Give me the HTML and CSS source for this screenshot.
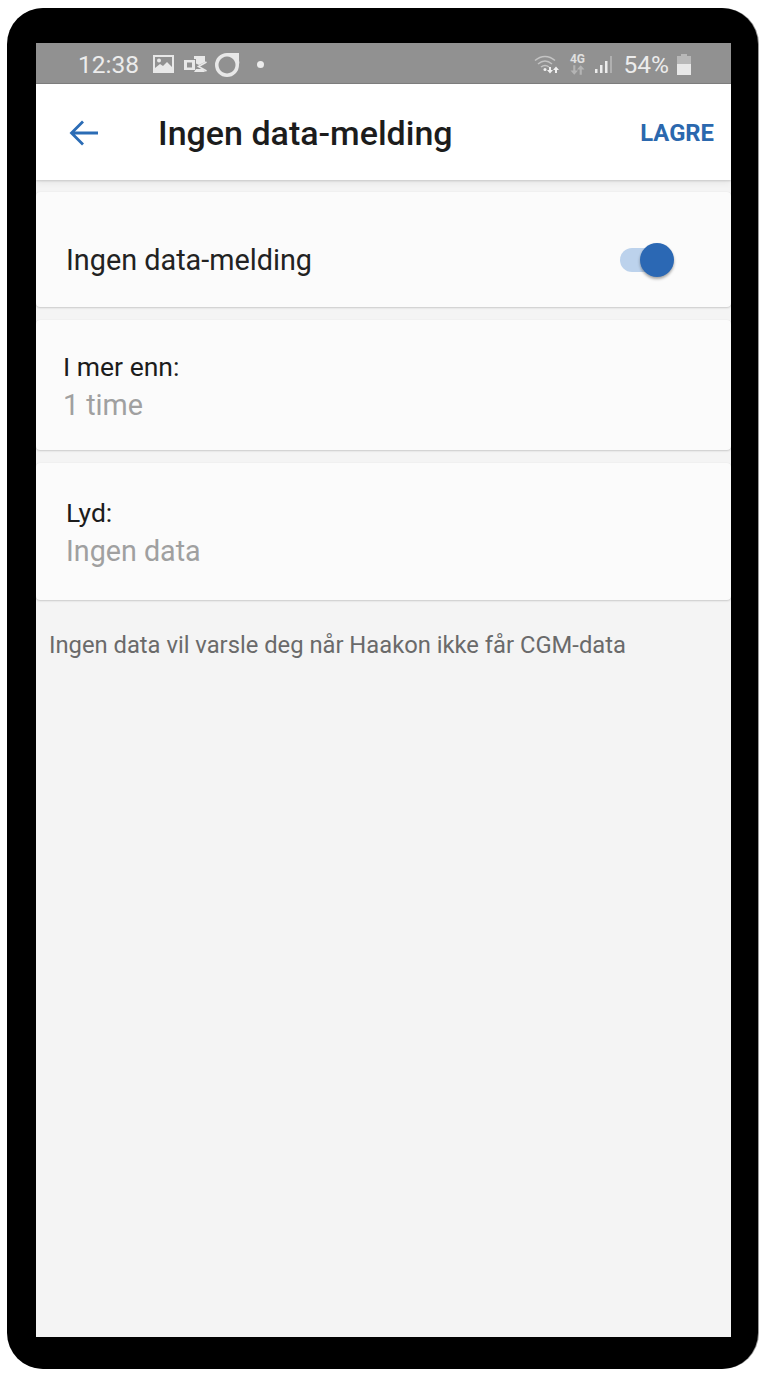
FILE: index.html
```html
<!DOCTYPE html>
<html lang="en">
<head>
  <meta charset="UTF-8" />
  <meta name="viewport" content="width=device-width, initial-scale=1.0" />
  <title>Ingen data-melding</title>
  <link rel="stylesheet" href="styles.css">
</head>
<body>
  <div class="phone">
    <div class="screen">
      <div class="status-bar">
        <div class="status-left">
          <span class="clock">12:38</span>
          <svg class="icon-image" width="21" height="18" viewBox="0 0 21 18">
            <path fill="#e8e8e8" fill-rule="evenodd" d="M0 0h21v18H0z M2 2v11l5-4 3 2 4-4 5 5V2z"/>
            <circle cx="6" cy="5.5" r="2" fill="#e8e8e8"/>
          </svg>
          <svg class="icon-mail" width="23" height="17" viewBox="0 0 23 17">
            <path fill="#e8e8e8" fill-rule="evenodd" d="M0 4h11v10H0z M3 6.5v5h5v-5z"/>
            <path fill="#e8e8e8" d="M10 0h11v6l-6 3-3-1.500V3h-2z"/>
            <path fill="none" stroke="#e8e8e8" stroke-width="1.600" d="M22.500 6l-8 4.500 8 4.500"/>
            <path fill="#e8e8e8" d="M12 13h7l2 3H10z"/>
          </svg>
          <svg class="icon-ring" width="25" height="25" viewBox="0 0 25 25">
            <path fill="#e8e8e8" fill-rule="evenodd" d="M12 1H24V9C24.800 10.500 24 11 24 13A12 12 0 1 1 12 1z M12 4.500a8.500 8.500 0 1 0 .01 0z"/>
          </svg>
          <span class="dot"></span>
        </div>
        <div class="status-right">
          <svg class="icon-wifi" width="27" height="20" viewBox="0 0 27 20">
            <g fill="none" stroke="#c4c4c4" stroke-width="1.500">
              <path d="M1 6.500C7 1 15 1 21 6.500"/>
              <path d="M4 10c4.500-3.800 9.500-3.800 14 0"/>
              <path d="M7 13c2.500-2 5.500-2 8 0"/>
            </g>
            <circle cx="11" cy="15.500" r="1.500" fill="#f0f0f0"/>
            <path fill="#f0f0f0" d="M15 13h2v3h2l-3 3.500-3-3.500h2z M23 19h-2v-3h-2l3-3.500 3 3.500h-2z"/>
          </svg>
          <div class="net">
            <span class="net-label">4G</span>
            <svg width="15" height="10" viewBox="0 0 14 9">
              <path fill="#b4b4b4" d="M3 0h2v5h2.500L4 9 .500 5H3z M11 9H9V4H6.500L10 0l3.500 4H11z"/>
            </svg>
          </div>
          <svg class="icon-signal" width="19" height="18" viewBox="0 0 19 18">
            <path fill="#ececec" d="M1 14h2.500v4H1z M6 10h2.500v8H6z M11 6h2.500v12H11z"/>
            <path fill="#b0b0b0" d="M16 1h2v17h-2z"/>
          </svg>
          <span class="battery-pct">54%</span>
          <svg class="icon-battery" width="14" height="21" viewBox="0 0 14 21">
            <path fill="#b8b8b8" d="M4 0h6v2h4v9H0V2h4z"/>
            <path fill="#e8e8e8" d="M0 10h14v11H0z"/>
          </svg>
        </div>
      </div>

      <div class="app-bar">
        <svg class="back" width="30" height="26" viewBox="0 0 30 26">
          <path fill="none" stroke="#2b6cb5" stroke-width="2.800" d="M29 13H3 M14 1.500L2.500 13 14 24.500"/>
        </svg>
        <h1 class="title">Ingen data-melding</h1>
        <span class="save">LAGRE</span>
      </div>

      <div class="content">
        <div class="card card-toggle">
          <span class="toggle-label">Ingen data-melding</span>
          <div class="toggle">
            <span class="toggle-track"></span>
            <span class="toggle-knob"></span>
          </div>
        </div>
        <div class="card card-time">
          <div class="row-label">I mer enn:</div>
          <div class="row-value">1 time</div>
        </div>
        <div class="card card-sound">
          <div class="row-label">Lyd:</div>
          <div class="row-value">Ingen data</div>
        </div>
        <p class="note">Ingen data vil varsle deg når Haakon ikke får CGM-data</p>
      </div>
    </div>
  </div>
</body>
</html>
```

FILE: styles.css
```css
html, body {
  margin: 0;
  padding: 0;
  background-color: white;
}
body {
  font-family: Roboto, "Liberation Sans", sans-serif;
  width: 770px;
  height: 1382px;
  overflow: hidden;
}
.phone {
  width: 751px;
  height: 1361px;
  margin: 8px 0 0 7px;
  padding: 35px 27px 32px 29px;
  box-sizing: border-box;
  background-color: black;
  border-radius: 36px;
  box-shadow: 1px 0 0 #999;
}
.screen {
  height: 100%;
  display: flex;
  flex-direction: column;
  background-color: #f4f4f4;
}
.status-bar {
  height: 41px;
  flex: none;
  display: flex;
  align-items: center;
  justify-content: space-between;
  padding: 2px 40px 0 42px;
  background-color: #919191;
  border-bottom: 1px solid #7f7f7f;
  box-sizing: border-box;
  color: #ececec;
}
.status-left, .status-right {
  display: flex;
  align-items: center;
}
.clock {
  font-size: 24.500px;
  line-height: 30px;
  width: 75px;
  padding-top: 2px;
}
.icon-mail {
  margin-left: 10px;
}
.icon-ring {
  margin-left: 8px;
}
.dot {
  width: 7px;
  height: 7px;
  margin-left: 17px;
  margin-right: 1px;
  border-radius: 50%;
  background-color: #ececec;
}
.net {
  display: flex;
  flex-direction: column;
  align-items: center;
  margin-left: 9px;
  width: 16px;
}
.net-label {
  font-size: 12px;
  font-weight: 700;
  line-height: 12px;
  color: #e0e0e0;
}
.icon-signal {
  margin-left: 8px;
}
.battery-pct {
  font-size: 24.500px;
  line-height: 30px;
  margin-left: 11px;
  padding-top: 2px;
}
.icon-battery {
  margin-left: 8px;
}
.app-bar {
  height: 96px;
  flex: none;
  display: flex;
  align-items: center;
  background-color: white;
  box-shadow: 0 1px 2px rgba(0,0,0,0.15), 0 3px 7px rgba(0,0,0,0.06);
  position: relative;
  padding: 2px 17px 0 33px;
  box-sizing: border-box;
}
.title {
  flex: 1;
  margin: 0 0 0 59px;
  font-size: 34px;
  font-weight: 500;
  color: #1c1c1c;
}
.save {
  font-size: 23.800px;
  font-weight: 700;
  color: #2b68ae;
}
.content {
  flex: 1;
  padding-top: 12px;
}
.card {
  background-color: #fbfbfb;
  border-radius: 4px;
  box-shadow: 0 1px 2px rgba(0,0,0,0.17), 0 0 1px rgba(0,0,0,0.08);
  box-sizing: border-box;
}
.card-toggle {
  height: 115px;
  display: flex;
  align-items: center;
  justify-content: space-between;
  padding: 20px 57px 0 30px;
}
.toggle-label {
  font-size: 28.800px;
  color: #222;
}
.toggle {
  position: relative;
  width: 54px;
  height: 34px;
}
.toggle-track {
  position: absolute;
  left: 0;
  top: 5px;
  width: 44px;
  height: 24px;
  border-radius: 12px;
  background-color: #bcd2ec;
}
.toggle-knob {
  position: absolute;
  right: 0;
  top: 0;
  width: 34px;
  height: 34px;
  border-radius: 50%;
  background-color: #2b68b4;
  box-shadow: 0 2px 3px rgba(0,0,0,0.35);
}
.card-time {
  height: 130px;
  margin-top: 13px;
  padding: 31px 27px 0;
}
.card-sound {
  height: 137px;
  margin-top: 13px;
  padding: 34px 30px 0;
}
.row-label {
  font-size: 26.500px;
  line-height: 32px;
  color: #1c1c1c;
}
.row-value {
  font-size: 28.700px;
  line-height: 44px;
  color: #a0a0a0;
}
.note {
  margin: 31px 0 0 13px;
  font-size: 23.750px;
  line-height: 28px;
  color: #6a6a6a;
}
```
